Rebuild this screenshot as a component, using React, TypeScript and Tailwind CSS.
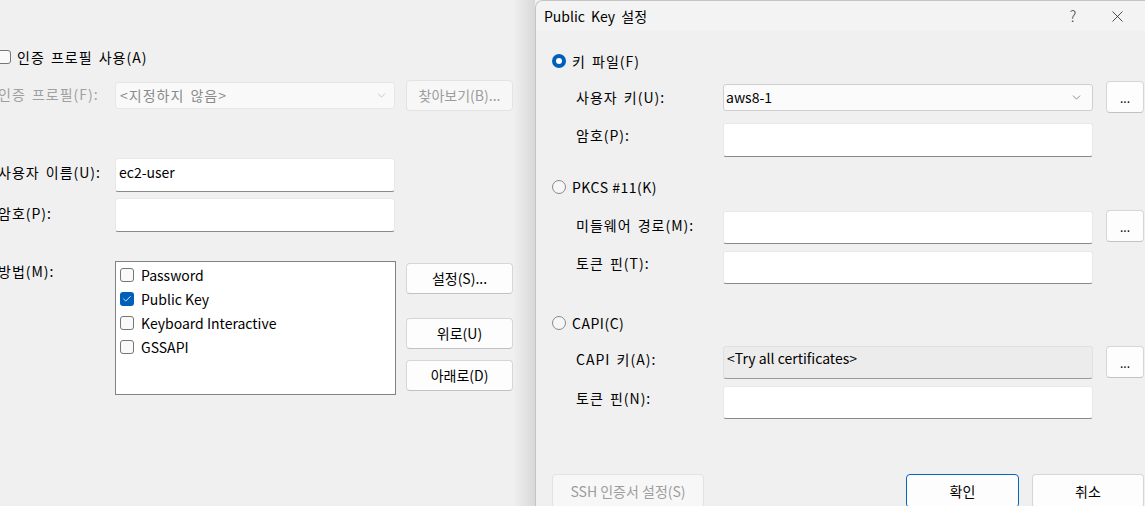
import { ChevronDown, X, Check } from "lucide-react";

const font = {
  fontFamily: '"Segoe UI", "Noto Sans CJK KR", "Noto Sans", sans-serif',
};

// labels in the reference run a bit wider than Noto CJK, so spread them
const wide = "tracking-[1px] [word-spacing:2px]";

function CheckBox({ checked = false }: { checked?: boolean }) {
  if (checked) {
    return (
      <span className="w-[14px] h-[14px] rounded-[3px] bg-[#005fb8] flex items-center justify-center shrink-0">
        <Check size={10} strokeWidth={2} className="text-white" />
      </span>
    );
  }
  return (
    <span className="w-[14px] h-[14px] rounded-[3px] border border-[#767676] bg-[#f9f9f9] shrink-0" />
  );
}

function Radio({ checked = false }: { checked?: boolean }) {
  if (checked) {
    return (
      <span className="w-[14px] h-[14px] rounded-full bg-[#005fb8] flex items-center justify-center shrink-0">
        <span className="w-[6px] h-[6px] rounded-full bg-white" />
      </span>
    );
  }
  return (
    <span className="w-[14px] h-[14px] rounded-full border border-[#8a8a8a] bg-[#f6f6f6] shrink-0" />
  );
}

function Input({
  value,
  className = "",
  disabled = false,
}: {
  value?: string;
  className?: string;
  disabled?: boolean;
}) {
  return (
    <div
      className={
        (disabled
          ? "bg-[#ececec] border border-[#e0e0e0] border-b-[#9a9a9a] "
          : "bg-white border border-[#e8e8e8] border-b-[#8a8a8a] ") +
        "rounded-[3px] flex items-center px-[3px] text-[14px] text-black shrink-0 " +
        className
      }
    >
      {value}
    </div>
  );
}

function Button({
  children,
  className = "",
  disabled = false,
  primary = false,
}: {
  children: React.ReactNode;
  className?: string;
  disabled?: boolean;
  primary?: boolean;
}) {
  let tone = "bg-[#fdfdfd] border-[#d6d6d6] border-b-[#c2c2c2] text-black";
  if (disabled) tone = "bg-[#f7f7f7] border-[#e3e3e3] text-[#9d9d9d]";
  if (primary) tone = "bg-[#fdfdfd] border-[#0067c0] text-black";
  return (
    <div
      className={
        "border rounded-[4px] flex items-center justify-center text-[14px] shrink-0 " +
        tone +
        " " +
        className
      }
    >
      {children}
    </div>
  );
}

function LeftPanel() {
  return (
    <div className="w-[535px] h-[506px] shrink-0 bg-[#f0f0f0] overflow-hidden relative">
      <div className="ml-[-3px] flex flex-col">
        <div className="mt-[48px] h-[18px] flex items-center gap-[6px]">
          <CheckBox />
          <span className={"text-[14px] text-black " + wide}>인증 프로필 사용(A)</span>
        </div>

        <div className="mt-[14px] h-[31px] flex items-center">
          <span className={"w-[118px] text-[14px] text-[#a0a0a0] pl-[1px] mb-[2px] " + wide}>
            인증 프로필(F):
          </span>
          <div className="w-[280px] h-[27px] bg-[#f9f9f9] border border-[#e6e6e6] rounded-[3px] flex items-center justify-between pl-[4px] pr-[6px] text-[14px] text-[#8a8a8a]">
            <span className={wide}>&lt;지정하지 않음&gt;</span>
            <ChevronDown size={13} strokeWidth={1} className="text-[#a0a0a0]" />
          </div>
          <Button disabled className="ml-[11px] w-[107px] h-[31px]">
            찾아보기(B)...
          </Button>
        </div>

        <div className="mt-[47px] h-[34px] flex items-center">
          <span className={"w-[118px] text-[14px] text-black pl-[1px] mb-[5px] " + wide}>
            사용자 이름(U):
          </span>
          <Input value="ec2-user" className="w-[280px] h-[34px] pb-[6px]" />
        </div>

        <div className="mt-[6px] h-[34px] flex items-center">
          <span className={"w-[118px] text-[14px] text-black pl-[1px] mb-[3px] " + wide}>
            암호(P):
          </span>
          <Input className="w-[280px] h-[34px]" />
        </div>

        <div className="mt-[29px] flex items-start">
          <span className={"w-[118px] text-[14px] text-black pl-[1px] " + wide}>방법(M):</span>
          <div className="w-[281px] h-[134px] bg-white border border-[#828282] pt-[1px] pl-[4px]">
            {[
              ["Password", false],
              ["Public Key", true],
              ["Keyboard Interactive", false],
              ["GSSAPI", false],
            ].map(([label, on]) => (
              <div key={label as string} className="h-[24px] flex items-center gap-[7px]">
                <CheckBox checked={on as boolean} />
                <span className="text-[14px] text-black">{label}</span>
              </div>
            ))}
          </div>
          <div className="ml-[10px] flex flex-col pt-[2px]">
            <Button className="w-[107px] h-[31px]">설정(S)...</Button>
            <Button className="mt-[24px] w-[107px] h-[31px]">위로(U)</Button>
            <Button className="mt-[11px] w-[107px] h-[31px]">아래로(D)</Button>
          </div>
        </div>
      </div>
      <div className="absolute right-0 top-0 h-full w-[22px] bg-gradient-to-r from-transparent to-[#d9d9d9]" />
    </div>
  );
}

function DotsButton({ className = "" }: { className?: string }) {
  return (
    <Button className={"ml-[13px] w-[38px] " + className}>
      <span className="text-[12px] leading-none mt-[2px]">...</span>
    </Button>
  );
}

function FieldLabel({ children }: { children: React.ReactNode }) {
  return (
    <span className={"w-[147px] shrink-0 text-[14px] leading-[20px] text-black mt-[2px] " + wide}>
      {children}
    </span>
  );
}

function Dialog() {
  return (
    <div className="w-[610px] h-[506px] shrink-0 bg-[#f0f0f0] rounded-tl-[8px] border-l border-t border-[#c4c4c4] flex flex-col overflow-hidden">
      <div className="h-[30px] bg-[#f3f3f3] flex items-center pl-[8px] shrink-0">
        <span className="text-[14px] text-black flex-1 [word-spacing:3px]">Public Key 설정</span>
        <span className="text-[15px] text-[#333] w-[20px] mr-[25px] text-center font-light">?</span>
        <X size={19} strokeWidth={1} className="text-[#222] mr-[18px]" />
      </div>

      <div className="mt-[21px] h-[18px] flex items-center gap-[6px] pl-[16px]">
        <Radio checked />
        <span className={"text-[14px] text-black " + wide}>키 파일(F)</span>
      </div>

      <div className="mt-[11px] h-[32px] flex items-center pl-[40px]">
        <span className={"w-[147px] text-[14px] text-black " + wide}>사용자 키(U):</span>
        <div className="w-[370px] h-[27px] bg-[#fbfbfb] border border-[#cfcfcf] rounded-[3px] flex items-center justify-between pl-[2px] pr-[9px] text-[14px] text-black">
          <span>aws8-1</span>
          <ChevronDown size={13} strokeWidth={1.2} className="text-[#555]" />
        </div>
        <DotsButton className="h-[32px]" />
      </div>

      <div className="mt-[10px] h-[34px] flex items-start pl-[40px]">
        <FieldLabel>암호(P):</FieldLabel>
        <Input className="w-[370px] h-[34px]" />
      </div>

      <div className="mt-[21px] h-[18px] flex items-center gap-[6px] pl-[16px]">
        <Radio />
        <span className="text-[14px] text-black tracking-[0.5px]">PKCS #11(K)</span>
      </div>

      <div className="mt-[14px] h-[34px] flex items-start pl-[40px]">
        <FieldLabel>
          <span className="block mt-[3px]">미들웨어 경로(M):</span>
        </FieldLabel>
        <Input className="w-[370px] h-[33px] mt-[1px]" />
        <DotsButton className="h-[32px]" />
      </div>

      <div className="mt-[7px] h-[33px] flex items-start pl-[40px]">
        <FieldLabel>토큰 핀(T):</FieldLabel>
        <Input className="w-[370px] h-[33px]" />
      </div>

      <div className="mt-[30px] h-[18px] flex items-center gap-[6px] pl-[16px]">
        <Radio />
        <span className="text-[14px] text-black tracking-[0.5px]">CAPI(C)</span>
      </div>

      <div className="mt-[14px] h-[33px] flex items-start pl-[40px]">
        <FieldLabel>
          <span className="block mt-[1px]">CAPI 키(A):</span>
        </FieldLabel>
        <Input disabled value="<Try all certificates>" className="w-[370px] h-[33px] pb-[8px]" />
        <DotsButton className="h-[32px]" />
      </div>

      <div className="mt-[7px] h-[33px] flex items-start pl-[40px]">
        <FieldLabel>토큰 핀(N):</FieldLabel>
        <Input className="w-[370px] h-[33px]" />
      </div>

      <div className="mt-[55px] flex items-start pl-[16px]">
        <Button disabled className="w-[152px] h-[34px]">
          SSH 인증서 설정(S)
        </Button>
        <Button primary className="ml-[202px] w-[113px] h-[34px]">
          확인
        </Button>
        <Button className="ml-[13px] w-[112px] h-[34px]">취소</Button>
      </div>
    </div>
  );
}

export default function App() {
  return (
    <div className="w-[1145px] h-[506px] flex overflow-hidden bg-[#f0f0f0]" style={font}>
      <LeftPanel />
      <Dialog />
    </div>
  );
}
